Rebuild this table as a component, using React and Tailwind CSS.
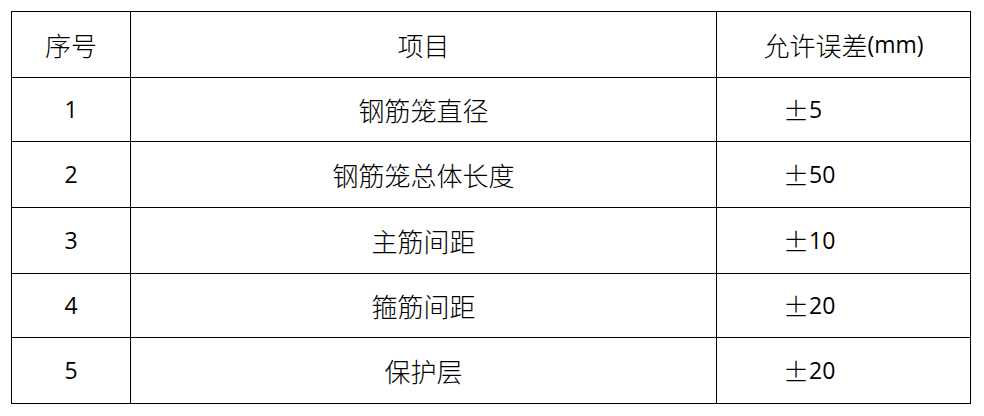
import React from "react";

const rows = [
  ["1", "钢筋笼直径", "5", "h-[64px]"],
  ["2", "钢筋笼总体长度", "50", "h-[66px]"],
  ["3", "主筋间距", "10", "h-[66px]"],
  ["4", "箍筋间距", "20", "h-[64px]"],
  ["5", "保护层", "20", "h-[66px]"],
];

const CJK = "font-['Noto_Sans_CJK_SC',sans-serif] font-light text-[26px]";

export default function App() {
  return (
    <div className="w-[984px] h-[416px] bg-white pt-[11px] pl-[11px] text-black">
      <div className="w-[960px] border-l border-t border-black font-['Open_Sans','Noto_Sans_CJK_SC',sans-serif]">
        <div className="flex h-[66px]">
          <div className={"w-[119px] border-r border-b border-black flex items-center justify-center " + CJK}>
            序号
          </div>
          <div className={"w-[586px] border-r border-b border-black flex items-center justify-center " + CJK}>
            项目
          </div>
          <div className="w-[254px] border-r border-b border-black flex items-center justify-center">
            <span className={CJK}>允许误差</span>
            <span className="text-[23px]">(mm)</span>
          </div>
        </div>
        {rows.map(([n, name, tol, h]) => (
          <div key={n} className={"flex " + h}>
            <div className="w-[119px] border-r border-b border-black flex items-center justify-center text-[23px]">
              {n}
            </div>
            <div className={"w-[586px] border-r border-b border-black flex items-center justify-center " + CJK}>
              {name}
            </div>
            <div className="w-[254px] border-r border-b border-black flex items-center pl-[66px] text-[23px]">
              <span className={CJK}>±</span>
              <span>{tol}</span>
            </div>
          </div>
        ))}
      </div>
    </div>
  );
}
